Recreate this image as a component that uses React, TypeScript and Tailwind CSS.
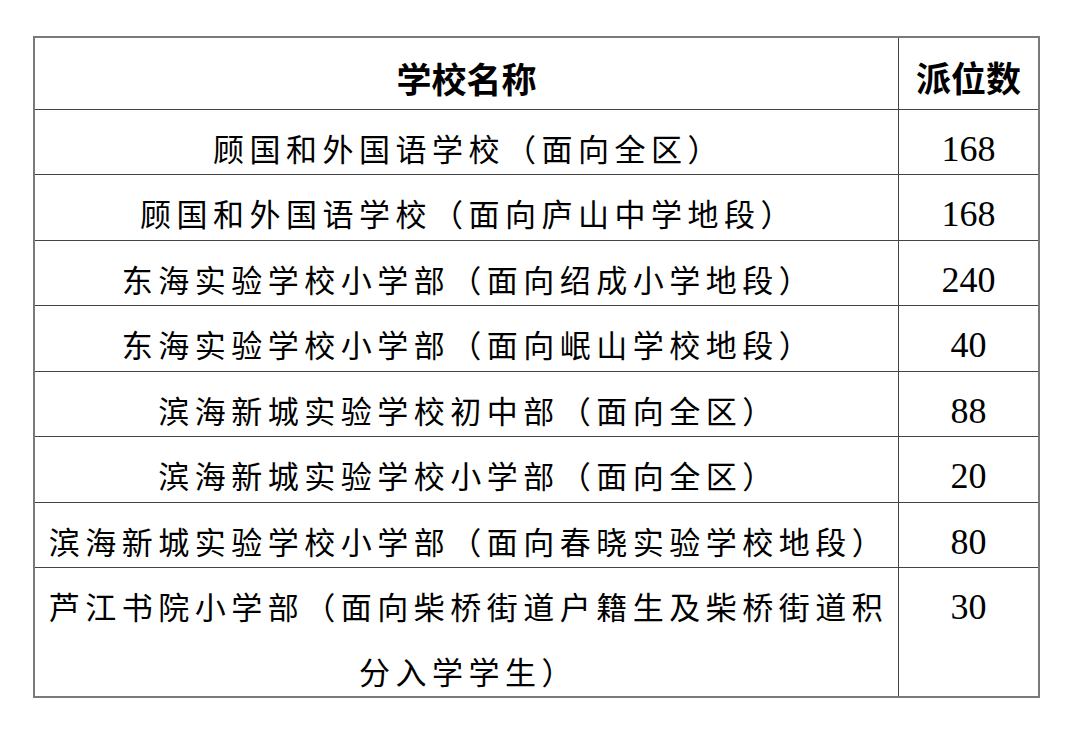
import React from "react";

type Row = { name: React.ReactNode; num: string; h: string };

const rows: Row[] = [
  { name: "顾国和外国语学校（面向全区）", num: "168", h: "h-[65px]" },
  { name: "顾国和外国语学校（面向庐山中学地段）", num: "168", h: "h-[66px]" },
  { name: "东海实验学校小学部（面向绍成小学地段）", num: "240", h: "h-[65px]" },
  { name: "东海实验学校小学部（面向岷山学校地段）", num: "40", h: "h-[66px]" },
  { name: "滨海新城实验学校初中部（面向全区）", num: "88", h: "h-[65px]" },
  { name: "滨海新城实验学校小学部（面向全区）", num: "20", h: "h-[66px]" },
  { name: "滨海新城实验学校小学部（面向春晓实验学校地段）", num: "80", h: "h-[65px]" },
];

const nameCell =
  "w-[864px] shrink-0 border-r border-[#444] text-center text-[31px] leading-[65px] tracking-[5.5px] pt-[5px] pl-[4px] whitespace-nowrap font-['Noto_Sans_CJK_SC','Noto_Sans',sans-serif]";
const numCell =
  "flex-1 text-center text-[36px] leading-[65px] pt-[7px] font-['Liberation_Serif','Times_New_Roman',serif]";

export default function App() {
  return (
    <div className="w-[1078px] h-[730px] bg-white pt-[36px] pl-[33px]">
      <div className="w-[1007px] border-2 border-[#7a7a7a] text-black">
        <div className="flex h-[72px] border-b border-[#444] font-['Noto_Sans_CJK_SC','Noto_Sans',sans-serif] font-bold text-[35px] leading-[72px]">
          <div className="w-[864px] shrink-0 border-r border-[#444] text-center pt-[4px]">
            学校名称
          </div>
          <div className="flex-1 text-center pt-[3px]">派位数</div>
        </div>
        {rows.map((r, i) => (
          <div key={i} className={`flex border-b border-[#444] ${r.h}`}>
            <div className={nameCell}>{r.name}</div>
            <div className={numCell}>{r.num}</div>
          </div>
        ))}
        <div className="flex h-[128px]">
          <div className={nameCell}>
            芦江书院小学部（面向柴桥街道户籍生及柴桥街道积
            <br />
            分入学学生）
          </div>
          <div className={numCell}>30</div>
        </div>
      </div>
    </div>
  );
}
